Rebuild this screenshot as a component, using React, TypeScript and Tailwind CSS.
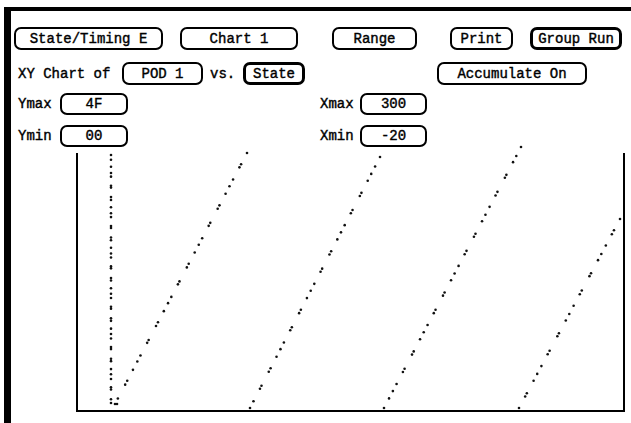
import React from "react";

type Pt = [number, number];

// dots along a segment, with a little irregular spacing like the scan
function along(x1: number, y1: number, x2: number, y2: number, n: number, seed: number): Pt[] {
  const pts: Pt[] = [];
  for (let i = 0; i < n; i++) {
    const j = i === 0 || i === n - 1 ? 0 : 0.35 * Math.sin(i * 2.7 + seed);
    const t = (i + j) / (n - 1);
    pts.push([x1 + (x2 - x1) * t, y1 + (y2 - y1) * t]);
  }
  return pts;
}

const dots: Pt[] = [
  ...along(111, 155, 111, 403, 44, 1),
  ...along(115, 404, 247, 153, 31, 2),
  ...along(250, 408, 380, 157, 31, 3),
  ...along(384, 408, 521, 147, 32, 4),
  ...along(519, 408, 620, 219, 23, 5),
  [117, 404],
];

function Btn({ label, w, bold, className = "" }: { label: string; w: string; bold?: boolean; className?: string }) {
  return (
    <div
      className={`${w} ${className} h-full flex items-center justify-center rounded-[7px] border-black ${
        bold ? "border-[3px]" : "border-2"
      }`}
    >
      {label}
    </div>
  );
}

export default function App() {
  return (
    <div className="w-[631px] h-[423px] bg-white pt-[7px] pl-[4px] overflow-hidden text-[14px] leading-none font-normal text-black font-['Liberation_Mono',monospace] [-webkit-text-stroke:0.4px_black]">
      <div className="h-[420px] border-t-4 border-l-[7px] border-black">
        {/* top buttons */}
        <div className="flex h-[23px] mt-[16px]">
          <Btn label="State/Timing E" w="w-[149px]" className="ml-[3px]" />
          <Btn label="Chart 1" w="w-[118px]" className="ml-[17px]" />
          <Btn label="Range" w="w-[85px]" className="ml-[34px]" />
          <Btn label="Print" w="w-[63px]" className="ml-[33px]" />
          <Btn label="Group Run" w="w-[92px]" bold className="ml-[17px]" />
        </div>

        <div className="flex items-center h-[23px] mt-[12px]">
          <span className="ml-[7px] w-[93px]">XY Chart of</span>
          <Btn label="POD 1" w="w-[81px]" className="ml-[11px]" />
          <span className="ml-[7px] w-[25px]">vs.</span>
          <Btn label="State" w="w-[62px]" bold className="ml-[8px]" />
          <Btn label="Accumulate On" w="w-[150px]" className="ml-[132px]" />
        </div>

        <div className="flex items-center h-[22px] mt-[8px]">
          <span className="ml-[7px] w-[34px]">Ymax</span>
          <Btn label="4F" w="w-[68px]" className="ml-[8px]" />
          <span className="ml-[192px] w-[34px]">Xmax</span>
          <Btn label="300" w="w-[67px]" className="ml-[6px]" />
        </div>

        <div className="flex items-center h-[22px] mt-[10px]">
          <span className="ml-[7px] w-[34px]">Ymin</span>
          <Btn label="00" w="w-[68px]" className="ml-[8px]" />
          <span className="ml-[192px] w-[34px]">Xmin</span>
          <Btn label="-20" w="w-[67px]" className="ml-[6px]" />
        </div>

        {/* XY chart */}
        <div className="relative ml-[65px] mt-[6px] w-[549px] h-[259px] border-l-2 border-r-2 border-b-2 border-black">
          <svg
            className="absolute -left-[2px] top-0 overflow-visible"
            width={549}
            height={259}
            viewBox="76 153 549 259"
          >
            {dots.map(([x, y], i) => (
              <circle key={i} cx={x} cy={y} r={1.3} fill="#111" />
            ))}
          </svg>
        </div>
      </div>
    </div>
  );
}
